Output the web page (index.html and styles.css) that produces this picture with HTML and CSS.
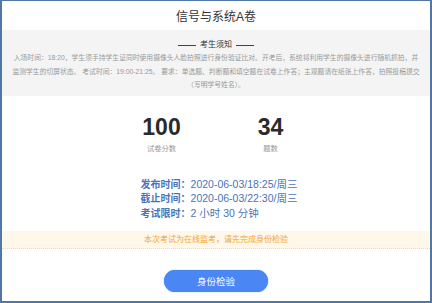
FILE: index.html
```html
<!DOCTYPE html>
<html lang="zh">
<head>
<meta charset="utf-8">
<link rel="stylesheet" href="styles.css">
</head>
<body>
<div class="frame">
  <h1 class="title">信号与系统A卷</h1>
  <section class="notice">
    <div class="notice-head"><span class="rule"></span><span>考生须知</span><span class="rule"></span></div>
    <p class="notice-text"><span class="ln">入场时间：18:20，学生须手持学生证同时使用摄像头人脸拍照进行身份验证比对。开考后，系统将利用学生的摄像头进行随机抓拍，并</span><span class="ln">监测学生的切屏状态。 考试时间：19:00-21:25。 要求：单选题、判断题和填空题在试卷上作答；主观题请在纸张上作答，拍照投稿提交</span><span class="ln">（写明学号姓名）。</span></p>
  </section>
  <section class="stats">
    <div class="stat"><div class="num">100</div><div class="label">试卷分数</div></div>
    <div class="stat"><div class="num">34</div><div class="label">题数</div></div>
  </section>
  <section class="times">
    <div class="times-inner">
      <div class="row"><span class="k">发布时间：</span><span class="v">2020-06-03/18:25/周三</span></div>
      <div class="row"><span class="k">截止时间：</span><span class="v">2020-06-03/22:30/周三</span></div>
      <div class="row"><span class="k">考试限时：</span><span class="v">2 小时 30 分钟</span></div>
    </div>
  </section>
  <div class="warn">本次考试为在线监考，请先完成身份检验</div>
  <div class="actions"><button class="btn">身份检验</button></div>
</div>
</body>
</html>
```
FILE: styles.css
```css
* { box-sizing: border-box; }
html, body { margin: 0; padding: 0; background: #fff; }
body { font-family: "Liberation Sans", "Noto Sans CJK SC", sans-serif; }
.frame {
  width: 432px; height: 303px;
  border: 2px solid #4f78a7; border-top-width: 1px;
  display: flex; flex-direction: column;
  overflow: hidden;
}
.title {
  margin: 0; height: 29px; padding-top: 3px;
  font-size: 12px; font-weight: normal; color: #333;
  line-height: 26px; text-align: center;
}
.notice {
  background: #f4f4f4; height: 66px; flex: none;
  padding: 9px 0 0;
}
.notice-head {
  display: flex; justify-content: center; align-items: center; gap: 4px;
  height: 12px; font-size: 8px; color: #333; line-height: 12px;
}
.rule { width: 18px; height: 1px; background: #444; }
.notice-text {
  margin: 0; font-size: 6.8px; line-height: 13.5px; color: #9a9a9a;
  text-align: center;
}
.ln { display: block; white-space: nowrap; }
.stats {
  display: flex; justify-content: center; padding-top: 20px;
}
.stat { width: 109px; text-align: center; }
.num { font-size: 23px; font-weight: bold; line-height: 23px; color: #2a2a2a; }
.label { font-size: 7.3px; color: #999; line-height: 10px; margin-top: 4.5px; }
.times { display: flex; justify-content: center; margin-top: 23px; padding-left: 6px; }
.times-inner { font-size: 10.5px; line-height: 14.5px; color: #4a74b8; }
.k { font-family: "Noto Sans CJK SC", sans-serif; font-weight: bold; font-size: 10px; }
.v { font-family: "Liberation Sans", "Noto Sans CJK SC", sans-serif; }
.warn {
  margin-top: 11px; height: 18px; flex: none;
  background: #fff7ea; color: #f2a33a;
  font-size: 8px; line-height: 17px; text-align: center;
  border-bottom: 1px dotted #e8dcc8;
}
.actions { display: flex; justify-content: center; padding-top: 21px; }
.btn {
  width: 104px; height: 22px; border: 0; border-radius: 11px;
  background: #4a86f4; color: #fff;
  font-family: "Noto Sans CJK SC", sans-serif; font-size: 9.5px;
  padding: 0; box-shadow: 0 0 1px #3d78e0;
}
```
